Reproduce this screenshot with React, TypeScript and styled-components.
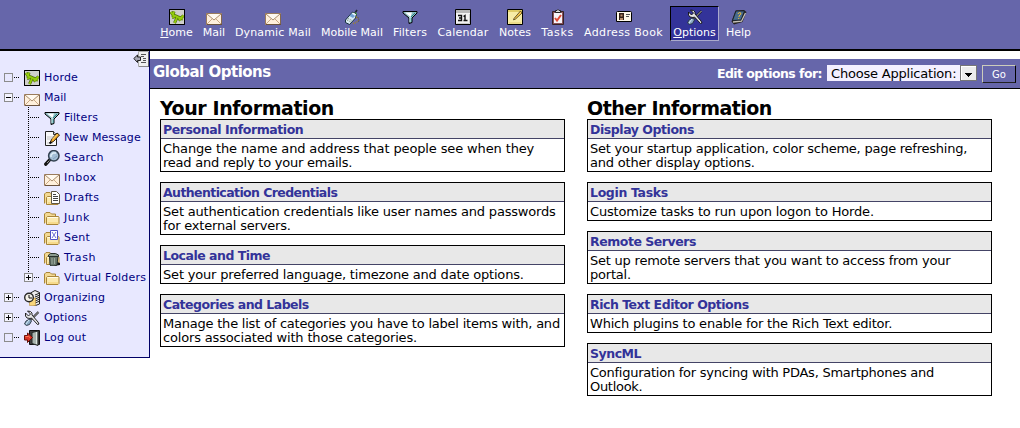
import React from 'react';
import styled, { createGlobalStyle, css } from 'styled-components';

const GlobalStyle = createGlobalStyle`
  * { box-sizing: border-box; }
  body { margin: 0; background: #fff; font-family: "DejaVu Sans", Verdana, sans-serif; overflow: hidden; }
`;

type IconName =
  | 'horde' | 'mail' | 'mobile' | 'filter' | 'calendar' | 'notes' | 'tasks' | 'book'
  | 'tools' | 'help' | 'compose' | 'search' | 'drafts' | 'folder' | 'sent' | 'trash'
  | 'organize' | 'logout' | 'collapse';

const folderShape = (
  <>
    <path d="M.5 13.500V4L2 2.500h4L7.500 4h4v2" fill="#f3d994" stroke="#a98538" />
    <path d="M2.500 14.500v-7l1-1h11l.5 1v6l-1 1z" fill="#fbe9ae" stroke="#a98538" />
    <path d="M3.500 7.500h10.500" stroke="#fffbe6" />
    <path d="M4 13h10" stroke="#f2cc68" />
  </>
);

const hordeLimbs = 'M2 3l2 3 4 1.500 1 .5 3 1 2.500-2.500M8 8l-1 3-1.500 3M4 6l1-3.500M9.500 9l2 2.500M3 8.500l3-1M12 9.500l2 .5';

const shapes: Record<IconName, React.ReactNode> = {
  horde: (
    <>
      <path d="M.5.500h15v15H.5z" fill="#d0d0cc" stroke="#000" />
      <path d={hordeLimbs} stroke="#4d6e09" strokeWidth="3" />
      <path d={hordeLimbs} stroke="#94cc0c" strokeWidth="1.800" />
      <path d="M.5.500h15v15H.5z" stroke="#000" />
    </>
  ),
  mail: (
    <>
      <path d="M.5 4.500h15v11H.5z" fill="#fff0dc" stroke="#9a7b5c" />
      <path d="M1 15l5-5M15 15l-5-5" stroke="#caa985" />
      <path d="M1 5l7 6 7-6" fill="#fff9f0" stroke="#a98c6c" />
      <path d="M1 15.500h15V5" fill="none" stroke="#5f4937" strokeWidth=".8" />
    </>
  ),
  mobile: (
    <>
      <path d="M11 4l2-3" stroke="#223" strokeWidth="1.600" />
      <path d="M1.500 11L8.500 3l4 2-1 4-6 6.500-4-2z" fill="#d9ebf5" stroke="#16303e" />
      <path d="M7.500 4.500l3.500 2.500-2 2L5.500 7z" fill="#6fa1d5" />
      <path d="M9 4l2.500 1.500" stroke="#fff" />
      <path d="M3 11l4 2M4 9.500l4 2" stroke="#7b8c62" strokeDasharray="1 1" />
      <path d="M12 8q4 2 2 4t-5 2.500" fill="none" stroke="#a78520" strokeWidth="1.500" strokeDasharray="1 1" />
      <path d="M13.500 8q2 2 1 5" fill="none" stroke="#33405e" strokeDasharray="1 1" />
      <path d="M11.500 3.500l1 2" stroke="#46b52b" />
    </>
  ),
  filter: (
    <>
      <path d="M1 2.500h14v1.500l-5 5v4.500l-3 1V9L1 4z" fill="#90bfc3" stroke="#000" />
      <path d="M3 3.500h7L8.500 8z" fill="#fff" />
      <path d="M9 9v4M13 4l-4 4" stroke="#267f83" />
      <path d="M8 8v5" stroke="#dff" />
    </>
  ),
  calendar: (
    <>
      <path d="M.5.500h15v15H.5z" fill="#f2f2f2" stroke="#000" />
      <path d="M1 2.500h14" stroke="#b9b9b9" strokeWidth="3" />
      <path d="M1.500 14.500h13V5" fill="none" stroke="#ccc" />
      <path d="M3 6.500h3.500v5H3M4 9h2.500M8.500 7.500l1.500-1v5M8.500 11.500h4" fill="none" stroke="#111" strokeWidth="1.400" />
    </>
  ),
  notes: (
    <>
      <path d="M.5.500h15v15H.5z" fill="#f6eca6" stroke="#000" />
      <path d="M1 2h14" stroke="#dfcd68" strokeWidth="2" />
      <path d="M7 9.500L13.500 2l1.500 2-6.500 6-2 .8z" fill="#ffd04b" stroke="#51431e" strokeWidth=".9" />
      <path d="M2 14h12" stroke="#e0cd6c" />
    </>
  ),
  tasks: (
    <>
      <path d="M2.500 2.500h11v13h-11z" fill="#89535a" stroke="#352226" />
      <path d="M4 4h8v10H4z" fill="#f5f5fa" />
      <path d="M5.500 3.500v-2h1.500L8 .5l1 1h1.500v2z" fill="#ddd" stroke="#222" />
      <path d="M5 9l2 2.500L11 6" fill="none" stroke="#e04a36" strokeWidth="2" />
    </>
  ),
  book: (
    <>
      <path d="M.5 3.500q0-1 1-1h13q1 0 1 1v9H.5z" fill="#fff9ea" stroke="#000" />
      <path d="M3 4h5v7H3z" fill="#342118" />
      <path d="M4.500 5.500h2v2h-2zM4 9h3v2H4z" fill="#b88d6c" />
      <path d="M10 5.500h4M10 7.500h3" stroke="#555" />
    </>
  ),
  tools: (
    <>
      <path d="M14.500 2L7 9.500" stroke="#151515" strokeWidth="2.200" />
      <path d="M14.500 2L7 9.500" stroke="#eee" strokeWidth=".8" />
      <path d="M1.500 3l3 3 2-2-3-3 3 .5L8 3v2l6 7 1 2-1.500.5-6-6.500-1.500.5-3-.5-1.500-2z" fill="#e7e7e7" stroke="#111" strokeWidth=".9" />
      <path d="M6 9L2 11l-1.500 3 2 1.500 3-1L7.500 11z" fill="#8baac3" stroke="#26313d" strokeWidth=".9" />
      <path d="M2 14l3-4" stroke="#d7ebf8" />
    </>
  ),
  help: (
    <>
      <path d="M4.500 1.500L13 1l2.500 2-4 10L3 15.500l-2.500-3z" fill="#262320" />
      <path d="M5 2l8.500 0-3.500 9-8.500.5z" fill="#476c8d" stroke="#151b21" strokeWidth=".8" />
      <path d="M2 13l8.500-.8L14.500 4" fill="none" stroke="#c5c1b8" strokeWidth="1.300" />
      <path d="M7 5q.5-1.500 1.800-1.500T9.800 5L8 7v1M7.200 9.500h1" fill="none" stroke="#f2bb35" />
    </>
  ),
  compose: (
    <>
      <path d="M1.500 1.500h8l3 3v11h-11z" fill="#f8f8f8" stroke="#222" />
      <path d="M9.500 1.500v3h3" fill="#ccc" stroke="#333" />
      <path d="M3 7h7M3 9h5M3 13h6" stroke="#c2c2c2" />
      <path d="M6 13l1.500-3.500L13 3l2.500 2L9.500 11.500z" fill="#f5ad2c" stroke="#2b1c0b" />
      <path d="M8.500 9L13 4.500" stroke="#ffe282" />
      <path d="M5.500 13.500l2-1.500" stroke="#111" strokeWidth="2" />
    </>
  ),
  search: (
    <>
      <path d="M5.500 10L1.800 14.200" stroke="#151515" strokeWidth="3.400" strokeLinecap="round" />
      <path d="M5.500 10.500L3 13" stroke="#969696" />
      <circle cx="9.800" cy="5.800" r="5.200" fill="#a4bfd6" stroke="#344251" strokeWidth="1.500" />
      <path d="M7 7V5l2-2h3" fill="none" stroke="#e0f0fa" strokeWidth="1.500" />
      <path d="M9 9l4-3" stroke="#82a2c0" />
    </>
  ),
  folder: folderShape,
  drafts: (
    <>
      {folderShape}
      <path d="M7.500 1.500h5l3 3v9h-8z" fill="#fff" stroke="#5f5744" />
      <path d="M9 4.500h3M9 6.500h5M9 8.500h5M9 10.500h5" stroke="#444" />
    </>
  ),
  sent: (
    <>
      {folderShape}
      <path d="M6.500.500h7v9h-7z" fill="#fff" stroke="#5050c8" />
      <path d="M8 2l4 6M12 2L8 8" stroke="#6f6fd5" />
    </>
  ),
  trash: (
    <>
      {folderShape}
      <path d="M13 12l3 1v2l-6 1z" fill="#111" />
      <path d="M5.500 6h8.500l-1 9-2 .8H7L6 15z" fill="#68776b" stroke="#28312b" />
      <path d="M4.500 5l2-1.500h5l3 1.500v1.500h-10z" fill="#8b9b8e" stroke="#28312b" />
      <path d="M8 8v6M10.500 8v6" stroke="#9aa89c" />
    </>
  ),
  organize: (
    <>
      <path d="M6.500 3L11 .5l4.500 2V14l-4 1.500-5-2z" fill="#eee" stroke="#222" />
      <path d="M11 5l5-2M11 7l5-2M11 9l5-2M11 11l5-2M11 13l5-2" stroke="#222" />
      <path d="M5.500 8h6v7.500h-6z" fill="#f8d67b" stroke="#ba9139" strokeWidth=".6" />
      <circle cx="5" cy="7.500" r="4.300" fill="#f5f2e8" stroke="#272727" strokeWidth="1.400" />
      <path d="M5 5v3h3" fill="none" stroke="#111" />
    </>
  ),
  logout: (
    <>
      <path d="M5.500.500h10v14h-10z" fill="#3d3d3d" stroke="#111" />
      <path d="M8 2.500l6-1.500v14.500l-6-2z" fill="#a8b4ad" stroke="#272b29" />
      <path d="M12.500 2v12" stroke="#dde5df" />
      <path d="M.5 5.500h3v-2.500l5 4.500-5 5V10h-3z" fill="#dc3525" stroke="#671009" />
      <path d="M1.500 6.500h3l1.500 1" fill="none" stroke="#ff7b58" />
    </>
  ),
  collapse: (
    <>
      <path d="M5.500.500h10v15h-10z" fill="#f0f0f0" stroke="#aaa" />
      <path d="M15.500 1v15H6" fill="none" stroke="#666" />
      <path d="M8 3.500h5M8 5.500h3M10 7.500h3M10 9.500h3M8 11.500h5" stroke="#555" />
      <path d="M.8 7.500l3.700-3.500v2h3v3.500h-3v2z" fill="#a7a7b5" stroke="#222" />
    </>
  ),
};

const IconSvg = styled.svg`
  display: block;
  width: 16px;
  height: 16px;
  flex: none;
`;

const Icon = ({ name }: { name: IconName }) => (
  <IconSvg viewBox="0 0 16 16" fill="none" aria-hidden="true">{shapes[name]}</IconSvg>
);

const Text = styled.span<{ $ls?: number }>`
  letter-spacing: ${(p) => p.$ls ?? 0}px;
  white-space: nowrap;
`;

const MenuBar = styled.nav`
  height: 51px;
  padding-top: 6px;
  display: flex;
  gap: 4px;
  padding-left: 157px;
  background: #6666aa;
  border-bottom: 2px solid #000;
`;

const MenuItem = styled.a<{ $w: number; $active?: boolean }>`
  width: ${(p) => p.$w}px;
  height: 35px;
  padding-top: 2px;
  display: flex;
  flex-direction: column;
  align-items: center;
  flex: none;
  color: #fff;
  font-size: 11px;
  line-height: 16px;
  border: 1px solid transparent;
  ${(p) => p.$active && css`
    background: #333399;
    border-color: #000 #aaaacc #aaaacc #000;
  `}
`;

const Accel = styled.span`
  text-decoration: underline;
  text-underline-offset: 1px;
`;

const Body = styled.div`
  display: flex;
  align-items: flex-start;
`;

const Sidebar = styled.aside`
  position: relative;
  width: 150px;
  height: 307px;
  padding-top: 16px;
  flex: none;
  background: #e8e8ff;
  border-right: 1px solid #000066;
  border-bottom: 1px solid #000066;
`;

const CollapseButton = styled.div`
  position: absolute;
  top: 0;
  right: 0;
`;

const TreeRow = styled.div`
  height: 20px;
  display: flex;
  align-items: flex-start;
  color: #000080;
  font-size: 11px;
  line-height: 22px;
`;

const TreeIcon = styled.div`
  width: 20px;
  padding-top: 3px;
`;

const Lines = styled.svg`
  display: block;
  width: 20px;
  height: 20px;
  flex: none;
`;

const Spacer = styled.div`
  width: 4px;
  flex: none;
`;

type Branch = 'leaf' | 'open' | 'closed' | 'none' | 'child' | 'lastChild';

const TreeLines = ({ kind }: { kind: Branch }) => (
  <Lines viewBox="0 0 20 20" fill="none" shapeRendering="crispEdges">
    {(kind === 'leaf' || kind === 'open' || kind === 'closed' || kind === 'lastChild') && (
      <>
        <path d="M.5 6.500h8v8h-8z" fill={kind === 'leaf' ? 'none' : '#f4f4ff'} stroke="#8c8c8c" />
        {kind !== 'leaf' && <path d="M2 10.500h5" stroke="#000" />}
        {(kind === 'closed' || kind === 'lastChild') && <path d="M4.500 8v5" stroke="#000" />}
        <path d="M10 10.500h5" stroke="#000" strokeDasharray="1 1" />
      </>
    )}
    {kind === 'child' && (
      <>
        <path d="M4.500 0v20" stroke="#000" strokeDasharray="1 1" />
        <path d="M6 10.500h9" stroke="#000" strokeDasharray="1 1" />
      </>
    )}
    {kind === 'lastChild' && <path d="M4.500 0v6" stroke="#000" strokeDasharray="1 1" />}
  </Lines>
);

const Main = styled.main`
  flex: 1;
  padding-top: 8px;
`;

const TitleBar = styled.header`
  height: 30px;
  display: flex;
  align-items: flex-start;
  padding: 0 4px 0 3px;
  color: #fff;
  background: #6666aa;
  border-bottom: 1px solid #000;
  font-weight: bold;
`;

const Title = styled.h1`
  margin: 0;
  flex: 1;
  font-size: 15px;
  line-height: 26px;
`;

const SelectorLabel = styled.label`
  margin-right: 5px;
  font-size: 12.5px;
  line-height: 29px;
`;

const Select = styled.div`
  width: 150px;
  height: 16px;
  margin-top: 6px;
  padding-left: 4px;
  display: flex;
  justify-content: space-between;
  color: #000;
  background: #f3f0ff;
  font-size: 13px;
  font-weight: normal;
  line-height: 17px;
`;

const SelectArrow = styled.svg`
  width: 17px;
  height: 16px;
  flex: none;
`;

const GoButton = styled.button`
  width: 34px;
  height: 18px;
  margin: 6px 0 0 5px;
  padding: 0;
  color: #fff;
  background: #6666aa;
  border: 1px solid;
  border-color: #ccccbb #000 #222 #ccccbb;
  font: 10px/17px "DejaVu Sans", Verdana, sans-serif;
`;

const Columns = styled.div`
  display: grid;
  grid-template-columns: 405px 405px;
  column-gap: 22px;
  padding: 8px 0 0 10px;
`;

const Column = styled.section`
  display: flex;
  flex-direction: column;
`;

const ColumnTitle = styled.h2`
  margin: 0;
  height: 22px;
  font-size: 19px;
  line-height: 22px;
`;

const Card = styled.article`
  margin-bottom: 10px;
  border: 1px solid #000;
`;

const CardTitle = styled.h3`
  margin: 0;
  height: 19px;
  padding-left: 2px;
  color: #333399;
  background: #e8e8e8;
  border-bottom: 1px solid #444466;
  font-size: 12.5px;
  line-height: 19px;
`;

const CardText = styled.p`
  margin: 0;
  padding: 3px 2px 1px;
  display: flex;
  flex-direction: column;
  color: #000;
  font-size: 13px;
  line-height: 14px;
`;

interface MenuEntry { icon: IconName; label: string; width: number; ls?: number; accel?: boolean; active?: boolean }

const menu: MenuEntry[] = [
  { icon: 'horde', label: 'Home', width: 39, accel: true },
  { icon: 'mail', label: 'Mail', width: 28 },
  { icon: 'mail', label: 'Dynamic Mail', width: 82, ls: 0.15 },
  { icon: 'mobile', label: 'Mobile Mail', width: 68 },
  { icon: 'filter', label: 'Filters', width: 40, ls: 0.15 },
  { icon: 'calendar', label: 'Calendar', width: 58, ls: 0.2 },
  { icon: 'notes', label: 'Notes', width: 38 },
  { icon: 'tasks', label: 'Tasks', width: 39, ls: 0.6 },
  { icon: 'book', label: 'Address Book', width: 85, ls: 0.35 },
  { icon: 'tools', label: 'Options', width: 49, accel: true, active: true },
  { icon: 'help', label: 'Help', width: 31 },
];

interface TreeEntry { icon: IconName; label: string; branch: Branch; nested?: boolean; ls?: number }

const tree: TreeEntry[] = [
  { icon: 'horde', label: 'Horde', branch: 'leaf', ls: 0.2 },
  { icon: 'mail', label: 'Mail', branch: 'open' },
  { icon: 'filter', label: 'Filters', branch: 'child', nested: true, ls: 0.15 },
  { icon: 'compose', label: 'New Message', branch: 'child', nested: true, ls: 0.1 },
  { icon: 'search', label: 'Search', branch: 'child', nested: true, ls: 0.35 },
  { icon: 'mail', label: 'Inbox', branch: 'child', nested: true, ls: 0.5 },
  { icon: 'drafts', label: 'Drafts', branch: 'child', nested: true, ls: 0.3 },
  { icon: 'folder', label: 'Junk', branch: 'child', nested: true, ls: 0.6 },
  { icon: 'sent', label: 'Sent', branch: 'child', nested: true, ls: 0.3 },
  { icon: 'trash', label: 'Trash', branch: 'child', nested: true, ls: 0.6 },
  { icon: 'folder', label: 'Virtual Folders', branch: 'lastChild', nested: true, ls: 0.2 },
  { icon: 'organize', label: 'Organizing', branch: 'closed', ls: 0.15 },
  { icon: 'tools', label: 'Options', branch: 'closed', ls: 0.1 },
  { icon: 'logout', label: 'Log out', branch: 'leaf', ls: 0.15 },
];

type Line = [text: string, spacing: number];
interface CardEntry { title: Line; lines: Line[] }
interface ColumnEntry { title: Line; cards: CardEntry[] }

const columns: ColumnEntry[] = [
  {
    title: ['Your Information', -0.42],
    cards: [
      { title: ['Personal Information', -0.42], lines: [['Change the name and address that people see when they', -0.13], ['read and reply to your emails.', -0.23]] },
      { title: ['Authentication Credentials', -0.59], lines: [['Set authentication credentials like user names and passwords', -0.185], ['for external servers.', -0.19]] },
      { title: ['Locale and Time', -0.49], lines: [['Set your preferred language, timezone and date options.', -0.18]] },
      { title: ['Categories and Labels', -0.51], lines: [['Manage the list of categories you have to label items with, and', -0.22], ['colors associated with those categories.', -0.17]] },
    ],
  },
  {
    title: ['Other Information', -0.52],
    cards: [
      { title: ['Display Options', -0.44], lines: [['Set your startup application, color scheme, page refreshing,', -0.24], ['and other display options.', -0.19]] },
      { title: ['Login Tasks', -0.34], lines: [['Customize tasks to run upon logon to Horde.', -0.17]] },
      { title: ['Remote Servers', -0.46], lines: [['Set up remote servers that you want to access from your', -0.22], ['portal.', -0.2]] },
      { title: ['Rich Text Editor Options', -0.47], lines: [['Which plugins to enable for the Rich Text editor.', -0.2]] },
      { title: ['SyncML', -0.47], lines: [['Configuration for syncing with PDAs, Smartphones and', -0.25], ['Outlook.', -0.3]] },
    ],
  },
];

export default function App() {
  return (
    <>
      <GlobalStyle />
      <MenuBar>
        {menu.map((m) => (
          <MenuItem key={m.label} $w={m.width} $active={m.active}>
            <Icon name={m.icon} />
            <Text $ls={m.ls}>
              {m.accel ? <><Accel>{m.label[0]}</Accel>{m.label.slice(1)}</> : m.label}
            </Text>
          </MenuItem>
        ))}
      </MenuBar>
      <Body>
        <Sidebar>
          <CollapseButton><Icon name="collapse" /></CollapseButton>
          {tree.map((t) => (
            <TreeRow key={t.label}>
              <Spacer />
              {t.nested && <TreeLines kind="none" />}
              <TreeLines kind={t.branch} />
              <TreeIcon><Icon name={t.icon} /></TreeIcon>
              <Text $ls={t.ls}>{t.label}</Text>
            </TreeRow>
          ))}
        </Sidebar>
        <Main>
          <TitleBar>
            <Title><Text $ls={-0.5}>Global Options</Text></Title>
            <SelectorLabel><Text $ls={-0.55}>Edit options for:</Text></SelectorLabel>
            <Select>
              <Text $ls={-0.2}>Choose Application:</Text>
              <SelectArrow viewBox="0 0 17 16" shapeRendering="crispEdges">
                <path d="M.5.500h16v15H.5z" fill="#ececec" stroke="#777" />
                <path d="M1.500 14.500v-13h14" fill="none" stroke="#fff" />
                <path d="M5 8h7v1h-1v1h-1v1H9v1H8v-1H7v-1H6V9H5z" fill="#000" />
              </SelectArrow>
            </Select>
            <GoButton>Go</GoButton>
          </TitleBar>
          <Columns>
            {columns.map((col) => (
              <Column key={col.title[0]}>
                <ColumnTitle><Text $ls={col.title[1]}>{col.title[0]}</Text></ColumnTitle>
                {col.cards.map((card) => (
                  <Card key={card.title[0]}>
                    <CardTitle><Text $ls={card.title[1]}>{card.title[0]}</Text></CardTitle>
                    <CardText>
                      {card.lines.map(([text, ls]) => <Text key={text} $ls={ls}>{text}</Text>)}
                    </CardText>
                  </Card>
                ))}
              </Column>
            ))}
          </Columns>
        </Main>
      </Body>
    </>
  );
}
